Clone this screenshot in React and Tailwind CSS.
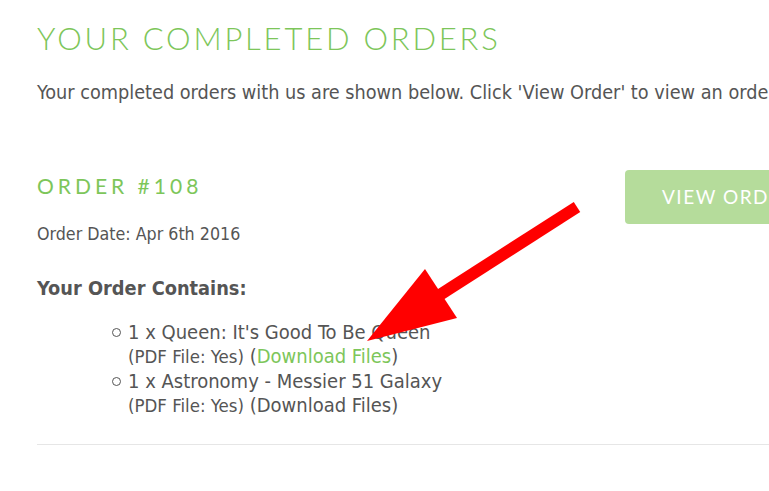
export default function App() {
  const body = { fontFamily: '"DejaVu Sans Condensed", "DejaVu Sans", sans-serif' };
  const head = { fontFamily: 'Lato, "Open Sans", sans-serif' };
  return (
    <div className="relative w-[769px] h-[491px] overflow-hidden bg-white text-[#555]" style={body}>
      <div className="w-[900px] pl-[37px] pt-[20px]">
        <h1 className="text-[31px] font-light leading-[36px] tracking-[2.8px] text-[#7dc65a]" style={head}>
          YOUR COMPLETED ORDERS
        </h1>
        <p className="mt-[26px] text-[19.7px] leading-[22px] whitespace-nowrap">
          Your completed orders with us are shown below. Click 'View Order' to view an order
        </p>
        <div className="mt-[66px] flex justify-between w-[828px]">
          <div>
            <h2 className="mt-[4px] text-[21px] leading-[24px] tracking-[4px] text-[#7dc65a]" style={head}>
              ORDER #108
            </h2>
            <p className="mt-[26px] text-[17.7px] leading-[20px] whitespace-nowrap">Order Date: Apr 6th 2016</p>
            <p className="mt-[34px] text-[19.8px] font-bold leading-[22px] whitespace-nowrap">Your Order Contains:</p>
          </div>
          <div
            className="w-[240px] h-[54px] rounded-[4px] bg-[#b5dc9b] text-white text-[19px] tracking-[1.5px] flex items-center pl-[37px]"
            style={head}
          >
            VIEW ORDER
          </div>
        </div>
        <ul className="mt-[20px] ml-[75px] flex flex-col">
          {[
            ["1 x Queen: It's Good To Be Queen", true],
            ["1 x Astronomy - Messier 51 Galaxy", false],
          ].map(([name, green]) => (
            <li key={name} className="flex">
              <span className="w-[16px] pt-[5px] flex-none">
                <span className="block w-[9px] h-[9px] mt-[3px] rounded-full border border-[#555]"></span>
              </span>
              <div>
                <div className="text-[20px] leading-[24px] whitespace-nowrap">{name}</div>
                <div className="text-[20px] leading-[24px] whitespace-nowrap">
                  <span className="text-[18.5px]">(PDF File: Yes)</span>{" "}
                  (<span className={green ? "text-[#7dc65a]" : ""}>Download Files</span>)
                </div>
              </div>
            </li>
          ))}
        </ul>
        <div className="mt-[26px] h-px w-[800px] bg-[#e6e6e6]"></div>
      </div>
      <svg className="absolute left-0 top-0 pointer-events-none" width="769" height="491" viewBox="0 0 769 491">
        <line x1="577" y1="207" x2="435" y2="298" stroke="#ff0000" strokeWidth="12" />
        <polygon points="367,341 425,269 457,318" fill="#ff0000" />
      </svg>
    </div>
  );
}
